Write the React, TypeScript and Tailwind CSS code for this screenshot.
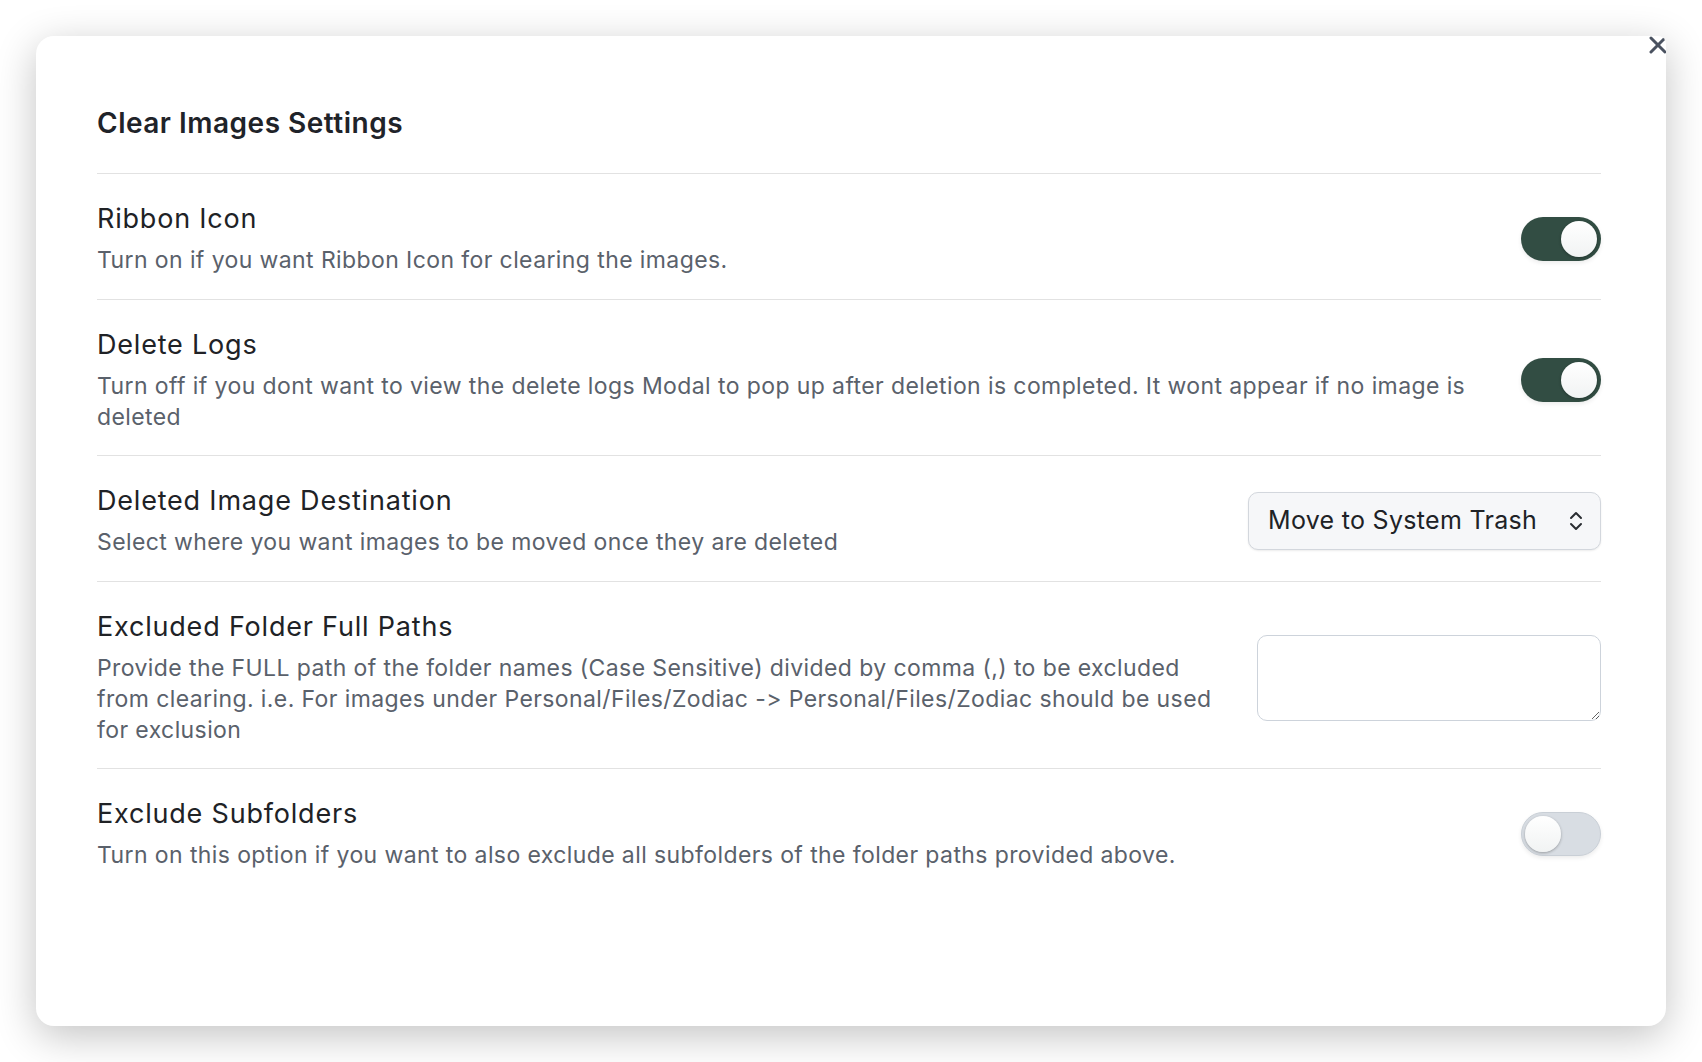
import React from 'react';

const font = { fontFamily: 'Inter, "Noto Sans", sans-serif' };

const Toggle = ({ on }: { on: boolean }) => {
  return (
    <div
      className={
        on
          ? 'flex h-[44px] w-[80px] shrink-0 items-center justify-end rounded-full bg-[#324d43] p-[4px] shadow-[0_2px_4px_rgba(0,0,0,0.08)]'
          : 'flex h-[44px] w-[80px] shrink-0 items-center justify-start rounded-full border border-[#c9cfd6] bg-[#d8dde3] p-[3px] shadow-[0_2px_4px_rgba(0,0,0,0.08)]'
      }
    >
      <div className="h-[36px] w-[36px] rounded-full bg-gradient-to-b from-white to-[#f1f3f3] shadow-[0_1px_3px_rgba(0,0,0,0.3)]" />
    </div>
  );
};

const SettingRow = ({
  name,
  desc,
  children,
}: {
  name: string;
  desc: string;
  children: React.ReactNode;
}) => {
  return (
    <div className="flex items-center border-t border-[#e2e2e2] pt-[28px] pb-[22.5px]">
      <div className="mr-[40px] flex-1">
        <div className="text-[27px] leading-[33px] tracking-[0.8px] text-[#202226]">{name}</div>
        <div className="mt-[10px] text-[23px] leading-[31px] tracking-[0.4px] text-[#5a616b]">{desc}</div>
      </div>
      {children}
    </div>
  );
};

const App = () => {
  return (
    <div className="min-h-screen bg-white p-[36px] [font-variant-ligatures:no-contextual]" style={font}>
      <div className="relative h-[990px] w-[1630px] overflow-hidden rounded-[18px] rounded-tr-[8px] bg-white pl-[61px] pr-[65px] pt-[69px] shadow-[0_10px_40px_rgba(0,0,0,0.24)]">
        <svg
          className="absolute right-[-4px] top-[-3px]"
          width="24"
          height="24"
          viewBox="0 0 24 24"
          fill="none"
          stroke="#4a5260"
          strokeWidth="3"
          strokeLinecap="round"
        >
          <path d="M5 5 L19 19" />
          <path d="M19 5 L5 19" />
        </svg>

        <h2 className="mb-[32px] h-[36px] text-[28px] font-semibold leading-[36px] tracking-[0.5px] text-[#1f2329]">
          Clear Images Settings
        </h2>

        <SettingRow name="Ribbon Icon" desc="Turn on if you want Ribbon Icon for clearing the images.">
          <Toggle on={true} />
        </SettingRow>

        <SettingRow
          name="Delete Logs"
          desc="Turn off if you dont want to view the delete logs Modal to pop up after deletion is completed. It wont appear if no image is deleted"
        >
          <Toggle on={true} />
        </SettingRow>

        <SettingRow
          name="Deleted Image Destination"
          desc="Select where you want images to be moved once they are deleted"
        >
          <div className="flex h-[58px] w-[353px] shrink-0 items-center justify-between rounded-[10px] border border-[#d3d7dd] bg-[#f6f7f9] pl-[19px] pr-[17px] shadow-[0_1px_2px_rgba(0,0,0,0.08)]">
            <span className="text-[25px] tracking-[0.3px] text-[#202226]">Move to System Trash</span>
            <svg width="14" height="20" viewBox="0 0 14 20" fill="none" stroke="#2a2d32" strokeWidth="2" strokeLinecap="round" strokeLinejoin="round">
              <path d="M2 7 L7 2 L12 7" />
              <path d="M2 13 L7 18 L12 13" />
            </svg>
          </div>
        </SettingRow>

        <SettingRow
          name="Excluded Folder Full Paths"
          desc="Provide the FULL path of the folder names (Case Sensitive) divided by comma (,) to be excluded from clearing. i.e. For images under Personal/Files/Zodiac -> Personal/Files/Zodiac should be used for exclusion"
        >
          <textarea className="h-[86px] w-[344px] shrink-0 rounded-[10px] border border-[#cdd3db] bg-white outline-none" />
        </SettingRow>

        <SettingRow
          name="Exclude Subfolders"
          desc="Turn on this option if you want to also exclude all subfolders of the folder paths provided above."
        >
          <Toggle on={false} />
        </SettingRow>
      </div>
    </div>
  );
};

export default App;
